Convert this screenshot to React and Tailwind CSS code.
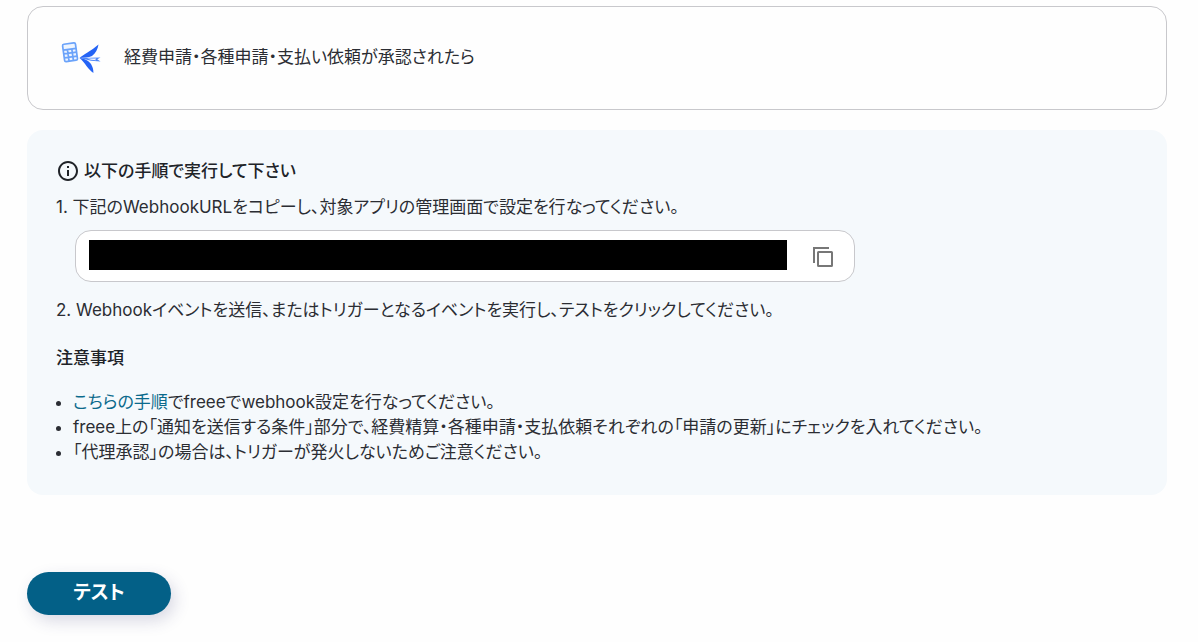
import React from "react";

function ServiceLogo() {
  return (
    <svg aria-hidden="true" width="40" height="32" viewBox="0 0 40 32" className="shrink-0">
      <g transform="rotate(-8 9 11)" fill="none" stroke="#6ba3fa" strokeWidth="1.7">
        <rect x="2.5" y="2.500" width="13" height="17.500" rx="1.5" fill="#eef5ff" />
        <path d="M2.5 8.2h13M2.5 12h13M2.5 16h13M6.8 8.2V20M11.2 8.2V20" />
      </g>
      <path d="M18.500 17C22 14 30 10 37.500 3.500c-.6 4.500-3 9-6.500 11.500-3.500 1.800-8 1.800-12.500 2z" fill="#2463f5" />
      <path d="M18.500 17c6 .8 9.500 3 11.500 6 1.700 3 2.500 5.500 2.400 9-5.400-3.500-8.400-10.500-13.900-15z" fill="#2463f5" />
      <path d="M18.500 17l21-.6-3.200 1.800 3.200 2.400-9.500-.8z" fill="#4d86f8" />
      <path d="M26 17.500h9.500l-1.200.8.8.9-5.100-.5z" fill="#f3f7ff" />
    </svg>
  );
}

function InfoIcon() {
  return (
    <svg aria-hidden="true" width="24" height="24" viewBox="0 0 24 24" fill="currentColor" className="shrink-0">
      <path d="M11 7h2v2h-2zm0 4h2v6h-2zm1-9C6.480 2 2 6.480 2 12s4.480 10 10 10 10-4.480 10-10S17.520 2 12 2zm0 18c-4.410 0-8-3.590-8-8s3.590-8 8-8 8 3.590 8 8-3.590 8-8 8z" />
    </svg>
  );
}

function CopyIcon() {
  return (
    <svg aria-hidden="true" width="20" height="20" viewBox="0 0 20 20" fill="none" stroke="currentColor" strokeWidth="2">
      <path d="M1 16V1h15" />
      <rect x="5" y="5" width="14" height="14" rx="0.5" />
    </svg>
  );
}

export default function App() {
  return (
    <main className="min-h-screen bg-[#fefefe] pt-1.5 pr-[31px] pb-[27px] pl-[27px] font-['Inter','Noto_Sans_CJK_JP',sans-serif] text-[17px] leading-[26px] text-[#2b2d33] [font-feature-settings:'palt']">
      <section className="flex items-center gap-[23px] rounded-2xl border border-[#c8c8cc] px-[33px] pt-[34px] pb-9">
        <div className="flex h-8 w-10 items-center">
          <ServiceLogo />
        </div>
        <p>経費申請・各種申請・支払い依頼が承認されたら</p>
      </section>

      <section className="mt-5 rounded-2xl bg-[#f5f9fc] px-[29px] pt-7 pb-[30px]">
        <h2 className="flex items-center gap-1 font-medium text-[#202328]">
          <InfoIcon />
          以下の手順で実行して下さい
        </h2>
        <p className="mt-2.5">1. 下記のWebhookURLをコピーし、対象アプリの管理画面で設定を行なってください。</p>
        <div className="mt-2.5 ml-[19px] flex h-[52px] max-w-[780px] items-center rounded-2xl border border-[#c8c8cc] bg-white pt-0.5 pr-[21px] pl-[13px]">
          <input
            type="text"
            readOnly
            aria-label="Webhook URL"
            className="mb-1 h-[30px] min-w-0 flex-1 bg-black text-black outline-none"
          />
          <button type="button" aria-label="コピー" className="ml-[26px] cursor-pointer text-[#777777]">
            <CopyIcon />
          </button>
        </div>
        <p className="mt-[15px]">2. Webhookイベントを送信、またはトリガーとなるイベントを実行し、テストをクリックしてください。</p>
        <h3 className="mt-[22px] font-medium text-[#202328]">注意事項</h3>
        <ul className="mt-[19px] list-disc pl-[17px] leading-[25px]">
          <li>
            <a href="#guide" className="text-[#0b6a8c]">こちらの手順</a>でfreeeでwebhook設定を行なってください。
          </li>
          <li>freee上の「通知を送信する条件」部分で、経費精算・各種申請・支払依頼それぞれの「申請の更新」にチェックを入れてください。</li>
          <li>「代理承認」の場合は、トリガーが発火しないためご注意ください。</li>
        </ul>
      </section>

      <button
        type="button"
        className="mt-[77px] h-[43px] w-36 cursor-pointer rounded-full bg-[#036087] pb-0.5 text-[19px] font-bold text-white shadow-[4px_6px_16px_rgba(50,50,110,0.18)]"
      >
        テスト
      </button>
    </main>
  );
}
